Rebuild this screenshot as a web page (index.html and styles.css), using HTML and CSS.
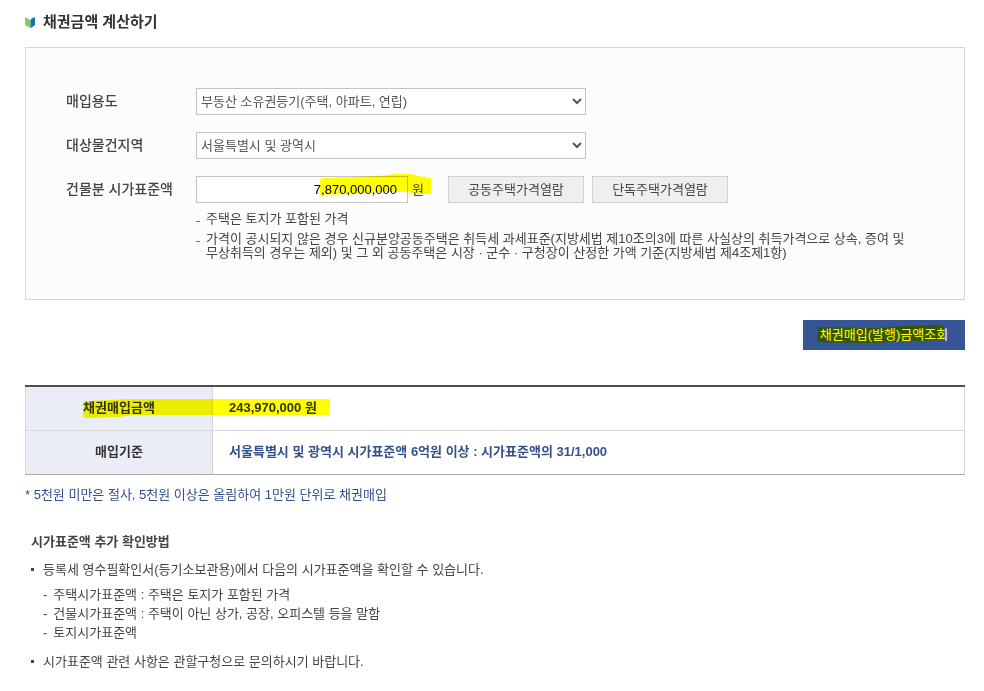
FILE: index.html
```html
<!DOCTYPE html>
<html lang="ko">
<head>
    <meta charset="UTF-8">
    <meta name="viewport" content="width=device-width, initial-scale=1.0">
    <title>채권금액 계산하기</title>
    <link rel="stylesheet" href="styles.css">
</head>
<body>
    <main class="page">
        <h1 class="title">
            <svg class="title-icon" width="10" height="11" viewBox="0 0 10 11" aria-hidden="true">
                <path d="M0 0 L5 3 V11 L0 8 Z" fill="#8cc95a"/>
                <path d="M5 3 L7 2 V10 L5 11 Z" fill="#4fb5d8"/>
                <path d="M6 2 L10 0 V8 L6 11 Z" fill="#1173a8"/>
            </svg>
            채권금액 계산하기
        </h1>

        <form id="bondForm">
            <div class="panel">
                <label for="purpose">매입용도</label>
                <select id="purpose" name="purpose">
                    <option>부동산 소유권등기(주택, 아파트, 연립)</option>
                </select>

                <label for="region">대상물건지역</label>
                <select id="region" name="region">
                    <option>서울특별시 및 광역시</option>
                </select>

                <label for="price">건물분 시가표준액</label>
                <div class="price-row">
                    <div class="amount">
                        <input type="text" id="price" name="price" value="7,870,000,000">
                        <span>원</span>
                        <svg class="marker marker-price" width="112" height="22" viewBox="0 0 112 22" aria-hidden="true">
                            <path d="M0 6 Q1 4 4 4 L60 2 L75 0 H91 L98 2 L111 4 V20 H95 L88 18 H60 L30 20 L0 21 Z"/>
                        </svg>
                    </div>
                    <button type="button" class="btn">공동주택가격열람</button>
                    <button type="button" class="btn">단독주택가격열람</button>
                </div>

                <ul class="notes">
                    <li>주택은 토지가 포함된 가격</li>
                    <li>가격이 공시되지 않은 경우 신규분양공동주택은 취득세 과세표준(지방세법 제10조의3에 따른 사실상의 취득가격으로 상속, 증여 및 무상취득의 경우는 제외) 및 그 외 공동주택은 시장 · 군수 · 구청장이 산정한 가액 기준(지방세법 제4조제1항)</li>
                </ul>
            </div>

            <div class="actions">
                <button type="submit" class="btn-search">
                    채권매입(발행)금액조회
                    <svg class="marker marker-search" width="128" height="18" viewBox="0 0 128 18" aria-hidden="true">
                        <path d="M1 3 Q0 2 3 2 L60 3 L90 1 L124 0 Q127 1 127 4 L126 15 L90 16 L50 18 L4 17 Q0 17 0 14 Z"/>
                    </svg>
                </button>
            </div>
        </form>

        <table class="result">
            <tbody>
                <tr>
                    <th scope="row">
                        <span class="marked">채권매입금액
                            <svg class="marker marker-result" width="247" height="20" viewBox="0 0 247 20" aria-hidden="true">
                                <path d="M0 4 Q0 2 8 2 L45 0 H247 V16 H50 L36 18 L2 19 Q0 18 0 15 Z"/>
                            </svg>
                        </span>
                    </th>
                    <td class="total">243,970,000 원</td>
                </tr>
                <tr>
                    <th scope="row">매입기준</th>
                    <td>서울특별시 및 광역시 시가표준액 6억원 이상 : 시가표준액의 31/1,000</td>
                </tr>
            </tbody>
        </table>
        <p class="rounding">* 5천원 미만은 절사, 5천원 이상은 올림하여 1만원 단위로 채권매입</p>

        <section class="guide">
            <h2>시가표준액 추가 확인방법</h2>
            <ul class="guide-list">
                <li>등록세 영수필확인서(등기소보관용)에서 다음의 시가표준액을 확인할 수 있습니다.
                    <ul class="sub-list">
                        <li>주택시가표준액 : 주택은 토지가 포함된 가격</li>
                        <li>건물시가표준액 : 주택이 아닌 상가, 공장, 오피스텔 등을 말함</li>
                        <li>토지시가표준액</li>
                    </ul>
                </li>
                <li>시가표준액 관련 사항은 관할구청으로 문의하시기 바랍니다.</li>
            </ul>
        </section>
    </main>
</body>
</html>
```

FILE: styles.css
```css
* {
    box-sizing: border-box;
}
body {
    margin: 0;
    background: #fff;
    color: #444;
    font-family: "Liberation Sans", "Noto Sans CJK KR", sans-serif;
    font-size: 13px;
    line-height: 19px;
    word-break: keep-all;
}
ul {
    list-style: none;
    margin: 0;
    padding: 0;
}
button, input, select {
    font-family: inherit;
    font-size: 13px;
}
.page {
    padding: 12px 19px 20px 25px;
}
.title {
    display: flex;
    align-items: center;
    gap: 8px;
    margin: 0 0 15px;
    font-size: 15px;
    line-height: 20px;
    color: #333;
}

/* Search form */
.panel {
    display: grid;
    grid-template-columns: 130px 1fr;
    row-gap: 17px;
    padding: 40px 40px 39px;
    border: 1px solid #d6d6d6;
    background: #fcfcfc;
}
.panel label {
    font-size: 14px;
    font-weight: 500;
    line-height: 27px;
}
.panel select {
    width: 100%;
    max-width: 390px;
    height: 27px;
    padding: 0;
    border: 1px solid #c3c3c3;
    border-radius: 0;
    background-color: #fff;
    color: #555;
}
.price-row {
    display: flex;
    gap: 8px;
}
.amount {
    position: relative;
    display: flex;
    align-items: center;
    gap: 4px;
    margin-right: 16px;
}
.amount input {
    width: 212px;
    height: 27px;
    padding: 0 10px;
    border: 1px solid #c3c3c3;
    text-align: right;
    color: #000;
}
.btn {
    width: 136px;
    height: 27px;
    padding: 0 0 3px;
    border: 1px solid #cfcfcf;
    background: #efefef;
    color: #444;
    cursor: pointer;
}
.notes {
    grid-column: 2;
    margin-top: -8px;
    line-height: 14px;
}
.notes li {
    position: relative;
    padding-left: 10px;
}
.notes li + li {
    margin-top: 6px;
}
.notes li::before {
    content: "";
    position: absolute;
    left: 0;
    top: 9px;
    width: 4px;
    height: 1px;
    background: #777;
}
.actions {
    display: flex;
    justify-content: flex-end;
    margin: 20px 0 35px;
}
.btn-search {
    position: relative;
    width: 162px;
    height: 30px;
    padding: 0 0 3px;
    border: none;
    background: #355594;
    color: #fff;
    cursor: pointer;
}

/* Highlighter strokes */
.marker {
    position: absolute;
    fill: #ff0;
    mix-blend-mode: multiply;
    pointer-events: none;
}
.marker-price {
    left: 124px;
    top: -2px;
}
.marker-search {
    left: 14px;
    top: 5px;
}
.marker-result {
    left: 0;
    top: -1px;
}
.marked {
    position: relative;
}

/* Result table */
.result {
    width: 100%;
    border-collapse: collapse;
    border: 1px solid #d6d6d6;
    border-top: 2px solid #544e4c;
    border-bottom-color: #aaa;
}
.result th,
.result td {
    height: 44px;
    padding: 0 16px 2px;
    border-bottom: 1px solid #d6d6d6;
}
.result tr:last-child th,
.result tr:last-child td {
    border-bottom-color: #aaa;
}
.result th {
    width: 187px;
    border-right: 1px solid #d6d6d6;
    background: #eaedf6;
    color: #333;
}
.result td {
    font-weight: bold;
    color: #34508a;
}
.result .total {
    color: #333;
}
.rounding {
    margin: 10px 0 0;
    color: #34508a;
}

/* Guide */
.guide {
    margin-top: 28px;
    padding-left: 6px;
}
.guide h2 {
    margin: 0 0 9px;
    font-size: 13px;
    line-height: 19px;
}
.guide-list > li {
    position: relative;
    padding-left: 12px;
}
.guide-list > li + li {
    margin-top: 10px;
}
.guide-list > li::before {
    content: "";
    position: absolute;
    left: 0;
    top: 8px;
    width: 3px;
    height: 3px;
    background: #444;
}
.sub-list {
    margin-top: 6px;
}
.sub-list li {
    display: flex;
    gap: 6px;
}
.sub-list li::before {
    content: "-";
}
```
